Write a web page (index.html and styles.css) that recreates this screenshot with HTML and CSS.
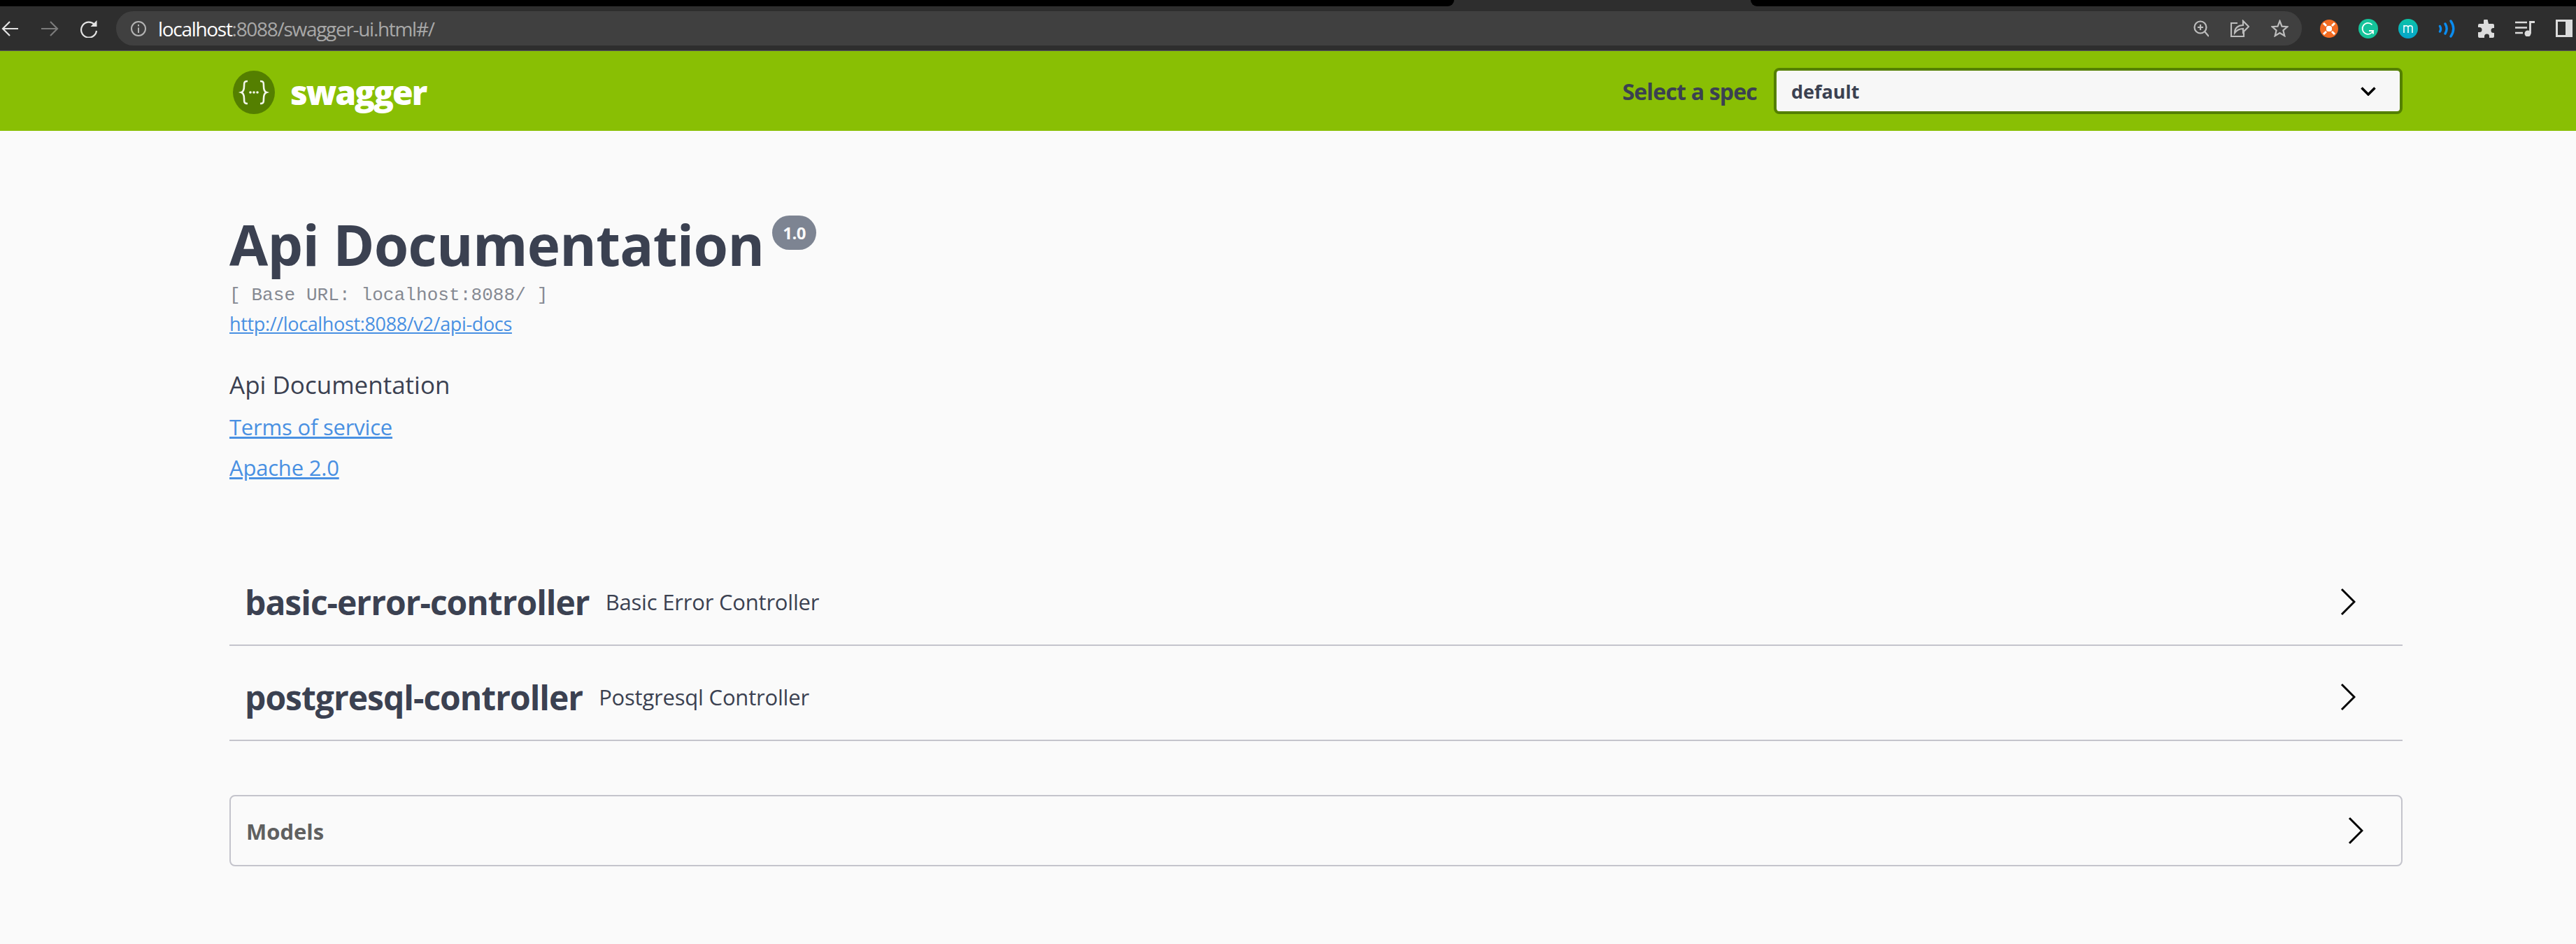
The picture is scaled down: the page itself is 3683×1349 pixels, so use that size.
FILE: index.html
```html
<!DOCTYPE html>
<html lang="en">
  <head>
    <meta charset="utf-8" />
    <title>Swagger UI</title>
    <link rel="stylesheet" href="styles.css" />
  </head>
  <body>
    <!-- browser chrome -->
    <div class="tabstrip">
      <div class="strip-left"></div>
      <div class="strip-right"></div>
    </div>
    <div class="toolbar">
      <div class="nav">
        <svg class="nav-icon" width="26" height="26" viewBox="0 0 26 26"><path d="M24 13H2M12 3L2 13l10 10" /></svg>
        <svg class="nav-icon nav-off" width="26" height="26" viewBox="0 0 26 26"><path d="M1 13h22M14 3l10 10-10 10" /></svg>
        <svg class="nav-icon" width="26" height="26" viewBox="0 0 26 26"><path d="M21 7a11 11 0 1 0 3 9" /><path class="solid" d="M24.500 1v9h-9z" /></svg>
      </div>
      <div class="omnibox">
        <svg class="info-icon" width="24" height="24" viewBox="0 0 24 24"><circle cx="12" cy="12" r="10" /><path d="M12 10.500V18M12 6v2.500" /></svg>
        <span class="url"><span class="url-host">localhost</span>:8088/swagger-ui.html#/</span>
        <div class="omni-actions">
          <svg width="22" height="24" viewBox="0 0 22 24"><circle cx="10" cy="10" r="8.500" /><path d="M10 6v8M6 10h8M16 16l6 7" /></svg>
          <svg width="27" height="25" viewBox="0 0 27 25"><path d="M10 5H1v19h18v-6" /><path d="M6 19c0-7 5-11 12-11V2l8 8-8 8v-5c-5 0-9 2-12 6z" /></svg>
          <svg width="25" height="25" viewBox="0 0 25 25"><path d="M12.500 2l3 7.600 8 .6-6.100 5.200 1.900 7.800-6.800-4.200-6.800 4.200 1.900-7.800L1.500 10.200l8-.6z" /></svg>
        </div>
      </div>
      <div class="extensions">
        <svg width="26" height="26" viewBox="0 0 26 26">
          <circle cx="13" cy="13" r="13" fill="#f26b21" />
          <rect x="9" y="9" width="8" height="8" rx="3" fill="#fff" />
          <path d="M5 5l4 4M21 5l-4 4M5 21l4-4M21 21l-4-4" stroke="#fff" stroke-width="3" />
        </svg>
        <svg width="28" height="28" viewBox="0 0 28 28">
          <circle cx="14" cy="14" r="14" fill="#15c39a" />
          <path d="M19.500 8.500a8 8 0 1 0 1.500 8.500h-6M21 17v4.500" stroke="#fff" stroke-width="1.800" fill="none" />
        </svg>
        <svg width="28" height="28" viewBox="0 0 28 28">
          <defs>
            <linearGradient id="mGrad" x1="0" y1="0" x2="0" y2="1">
              <stop offset="0" stop-color="#0cc3a6" />
              <stop offset="1" stop-color="#05a4cc" />
            </linearGradient>
          </defs>
          <circle cx="14" cy="14" r="14" fill="url(#mGrad)" />
          <path d="M8 20v-11M8 12c0-3 6-3 6 0v8M14 12c0-3 6-3 6 0v8" stroke="#fff" stroke-width="1.500" fill="none" />
        </svg>
        <svg width="27" height="26" viewBox="0 0 27 26">
          <path d="M2.500 9.500c1.500 2.500 1.500 5 0 7.500M10 6c2.800 4.500 2.800 9.500 0 14M18 2c4.800 7 4.800 15 0 22" stroke="#0a8cf0" stroke-width="3.400" fill="none" stroke-linecap="round" />
        </svg>
        <svg width="25" height="26" viewBox="0 0 25 26">
          <path d="M9 2a3 3 0 0 1 6 0l1 4h6a2 2 0 0 1 2 2v4h-1a3.500 3.500 0 0 0 0 7h1v5a2 2 0 0 1-2 2h-5v-2a3.500 3.500 0 0 0-7 0v2H3a2 2 0 0 1-2-2v-6h2a3.500 3.500 0 0 0 0-7H1V8a2 2 0 0 1 2-2h6z" fill="#dcdcdc" />
        </svg>
        <svg width="28" height="22" viewBox="0 0 28 22">
          <path d="M0 2h17M0 9.500h17M0 17h11" stroke="#dcdcdc" stroke-width="2.400" fill="none" />
          <path d="M21.500 18V1.500H28" stroke="#dcdcdc" stroke-width="2.800" fill="none" />
          <circle cx="18" cy="18" r="4.500" fill="#dcdcdc" />
        </svg>
        <svg width="25" height="25" viewBox="0 0 25 25">
          <rect x="2.500" y="1.500" width="21" height="22" fill="none" stroke="#dcdcdc" stroke-width="3" />
          <rect x="15" y="1" width="9" height="23" fill="#dcdcdc" />
        </svg>
      </div>
    </div>

    <!-- swagger page -->
    <header class="topbar">
      <div class="wrapper topbar-inner">
        <a class="logo">
          <svg width="60" height="62" viewBox="0 0 60 62">
            <ellipse cx="30" cy="31" rx="30" ry="31" fill="#547f00" />
            <path class="logo-brace" d="M21 15c-5 0-5 2-5 7s-1 8-4 9c3 1 4 4 4 9s0 7 5 7M39 15c5 0 5 2 5 7s1 8 4 9c-3 1-4 4-4 9s0 7-5 7" />
            <circle class="logo-dot" cx="25" cy="31" r="1.800" />
            <circle class="logo-dot" cx="30" cy="31" r="1.800" />
            <circle class="logo-dot" cx="35" cy="31" r="1.800" />
          </svg>
          <span class="logo-text">swagger</span>
        </a>
        <form class="spec-form">
          <label class="spec-label">Select a spec</label>
          <div class="spec-select">
            <span>default</span>
            <svg width="22" height="13" viewBox="0 0 22 13"><path d="M1.500 1.500L11 11l9.500-9.500" /></svg>
          </div>
        </form>
      </div>
    </header>

    <main class="wrapper">
      <section class="info">
        <h2 class="title">Api Documentation<span class="version">1.0</span></h2>
        <p class="base-url">[ Base URL: localhost:8088/ ]</p>
        <a class="docs-link">http://localhost:8088/v2/api-docs</a>
        <p class="description">Api Documentation</p>
        <p class="info-link"><a>Terms of service</a></p>
        <p class="info-link"><a>Apache 2.0</a></p>
      </section>

      <section class="tags">
        <div class="tag-row">
          <span class="tag-name">basic-error-controller</span>
          <span class="tag-desc">Basic Error Controller</span>
          <svg class="chevron" width="22" height="40" viewBox="0 0 22 40"><path d="M2 2l18 18L2 38" /></svg>
        </div>
        <div class="tag-row">
          <span class="tag-name">postgresql-controller</span>
          <span class="tag-desc">Postgresql Controller</span>
          <svg class="chevron" width="22" height="40" viewBox="0 0 22 40"><path d="M2 2l18 18L2 38" /></svg>
        </div>
      </section>

      <section class="models">
        <span class="models-title">Models</span>
        <svg class="chevron" width="22" height="40" viewBox="0 0 22 40"><path d="M2 2l18 18L2 38" /></svg>
      </section>
    </main>
  </body>
</html>
```
FILE: styles.css
```css
* {
  box-sizing: border-box;
}

html,
body {
  margin: 0;
  padding: 0;
}

body {
  background-color: #fafafa;
  font-family: "Open Sans", "Noto Sans", sans-serif;
  color: #3b4151;
  overflow: hidden;
}

/* browser chrome */
.tabstrip {
  display: flex;
  justify-content: space-between;
  height: 9px;
  background-color: #2e2e2e;
}

.strip-left {
  width: 2079px;
  background-color: #000;
  border-bottom-right-radius: 9px;
}

.strip-right {
  width: 1180px;
  background-color: #000;
  border-bottom-left-radius: 9px;
}

.toolbar {
  display: flex;
  align-items: center;
  height: 64px;
  background-color: #2e2e2e;
  border-bottom: 1px solid #5a5a5a;
}

.nav {
  display: flex;
  gap: 30px;
  margin-left: 2px;
  margin-right: 26px;
}

.nav-icon path {
  fill: none;
  stroke: #e3e3e3;
  stroke-width: 2.2;
}

.nav-icon path.solid {
  fill: #e3e3e3;
  stroke: none;
}

.nav-off path {
  stroke: #7b7b7b;
}

.omnibox {
  display: flex;
  align-items: center;
  flex: 0 0 3125px;
  height: 49px;
  padding-left: 20px;
  padding-right: 19px;
  border-radius: 25px;
  background-color: #404040;
}

.info-icon {
  fill: none;
  stroke: #b4b4b4;
  stroke-width: 2;
}

.url {
  margin-left: 16px;
  font-size: 28px;
  color: #a8a8a8;
  letter-spacing: -1.3px;
}

.url-host {
  color: #fff;
}

.omni-actions {
  display: flex;
  align-items: center;
  gap: 31px;
  margin-left: auto;
}

.omni-actions svg {
  fill: none;
  stroke: #bdbdbd;
  stroke-width: 2.2;
}

.extensions {
  display: flex;
  align-items: center;
  gap: 29px;
  margin-left: 26px;
}

/* top bar */
.wrapper {
  width: 3107px;
  margin-left: 328px;
}

.topbar {
  height: 114px;
  background-color: #89bf04;
}

.topbar-inner {
  display: flex;
  align-items: center;
  justify-content: space-between;
  height: 100%;
}

.logo {
  display: flex;
  align-items: center;
  gap: 22px;
  margin-left: 5px;
  padding-top: 3px;
}

.logo-brace {
  fill: none;
  stroke: #f2f6e8;
  stroke-width: 2.6;
}

.logo-dot {
  fill: #f2f6e8;
}

.logo-text {
  font-size: 48px;
  font-weight: 800;
  color: #fff;
  letter-spacing: -2.1px;
}

.spec-form {
  display: flex;
  align-items: center;
  gap: 24px;
}

.spec-label {
  font-size: 32px;
  font-weight: 700;
  color: #3b4151;
  letter-spacing: -0.8px;
}

.spec-select {
  display: flex;
  align-items: center;
  justify-content: space-between;
  width: 899px;
  height: 66px;
  padding: 0 34px 0 21px;
  border: 4px solid #547f00;
  border-radius: 8px;
  background-color: #f7f7f7;
  font-size: 27px;
  font-weight: 700;
}

.spec-select svg path {
  fill: none;
  stroke: #000;
  stroke-width: 3.5;
}

/* info */
.info {
  padding-top: 112px;
}

.title {
  display: flex;
  align-items: flex-start;
  margin: 0;
  font-size: 80px;
  font-weight: 700;
  line-height: 100px;
  letter-spacing: -0.7px;
}

.version {
  height: 49px;
  margin-top: 9px;
  margin-left: 12px;
  padding: 0 15px;
  line-height: 49px;
  border-radius: 25px;
  background-color: #7d8492;
  color: #fafafa;
  font-size: 24px;
  letter-spacing: -0.5px;
}

.base-url {
  margin: 7px 0 0;
  font-family: "Liberation Mono", monospace;
  font-size: 26px;
  line-height: 32px;
  letter-spacing: 0.1px;
  color: #858992;
}

.docs-link {
  display: block;
  margin-top: 7px;
  font-size: 27px;
  line-height: 36px;
  color: #4990e2;
  text-decoration: underline;
  letter-spacing: -0.35px;
}

.description {
  margin: 45px 0 0;
  font-size: 35px;
  line-height: 48px;
  color: #3b4151;
}

.info-link {
  margin: 14px 0 0;
  font-size: 31px;
  line-height: 44px;
  color: #4990e2;
  text-decoration: underline;
  letter-spacing: -0.2px;
}

/* tags */
.tags {
  margin-top: 97px;
}

.tag-row {
  display: flex;
  align-items: center;
  height: 136px;
  padding: 12px 67px 0 22px;
  border-bottom: 2px solid #c4c4cc;
}

.tag-name {
  font-size: 48px;
  font-weight: 700;
  letter-spacing: -1px;
}

.tag-desc {
  margin-left: 23px;
  font-size: 31px;
  letter-spacing: -0.2px;
}

.chevron {
  margin-left: auto;
}

.chevron path {
  fill: none;
  stroke: #000;
  stroke-width: 3;
}

/* models */
.models {
  display: flex;
  align-items: center;
  height: 102px;
  margin-top: 77px;
  padding: 0 54px 0 22px;
  border: 2px solid #c4c4cc;
  border-radius: 8px;
}

.models-title {
  padding-top: 2px;
  font-size: 31px;
  font-weight: 700;
  color: #606060;
}
```
